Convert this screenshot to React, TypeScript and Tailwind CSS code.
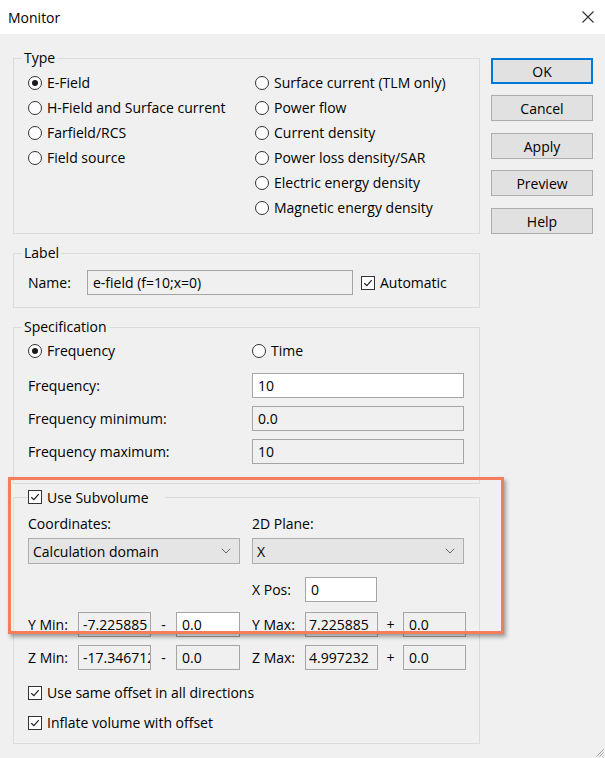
import React from 'react';

const Radio = ({ checked, label }: { checked?: boolean; label: string }) => (
  <div className="flex items-center gap-[5px] h-[25px]">
    <span className="w-[14px] h-[14px] rounded-full border border-[#333] bg-white flex items-center justify-center shrink-0">
      {checked && <span className="w-[6px] h-[6px] rounded-full bg-[#1a1a1a]" />}
    </span>
    <span>{label}</span>
  </div>
);

const Check = () => (
  <span className="w-[14px] h-[14px] border border-[#333] bg-white flex items-center justify-center shrink-0">
    <svg width="10" height="10" viewBox="0 0 10 10">
      <path d="M1.3 5.2 L3.9 7.7 L8.7 2.2" fill="none" stroke="#222" strokeWidth="1.2" />
    </svg>
  </span>
);

const Group = ({ title, className, children }: { title: string; className: string; children: React.ReactNode }) => (
  <div className={`relative border border-[#dcdcdc] ${className}`}>
    <span className="absolute -top-[11px] left-[8px] px-[2px] bg-[#f0f0f0] leading-[20px]">{title}</span>
    {children}
  </div>
);

const Field = ({ value, className }: { value: string; className: string }) => (
  <div className={`h-[25px] border border-[#a5a5a5] flex items-center overflow-hidden whitespace-nowrap ${className}`}>
    {value}
  </div>
);

const Chevron = () => (
  <svg width="10" height="6" viewBox="0 0 10 6">
    <path d="M0.8 0.8 L5 5 L9.2 0.8" fill="none" stroke="#666" strokeWidth="1" />
  </svg>
);

const Button = ({ label, primary, className }: { label: string; primary?: boolean; className?: string }) => (
  <div
    className={`h-[26px] flex items-center justify-center bg-[#e1e1e1] ${
      primary ? 'border-2 border-[#0078d7]' : 'border border-[#adadad]'
    } ${className ?? ''}`}
  >
    {label}
  </div>
);

export default function App() {
  return (
    <div className="relative w-[605px] h-[758px] bg-[#f0f0f0] text-[14px] text-black font-['Open_Sans',sans-serif] overflow-hidden">
      {/* Title bar */}
      <div className="h-[34px] bg-white flex items-center justify-between pl-[8px] pr-[11px]">
        <span className="text-[14px]">Monitor</span>
        <svg width="12" height="12" viewBox="0 0 12 12">
          <path d="M0.5 0.5 L11.5 11.5 M11.5 0.5 L0.5 11.5" stroke="#333" strokeWidth="1.1" />
        </svg>
      </div>

      <div className="flex pl-[13px] pt-[24px]">
        <div className="w-[467px] flex flex-col">
          {/* Type */}
          <Group title="Type" className="h-[176px] pt-[11px] pl-[14px]">
            <div className="flex">
              <div className="w-[227px] flex flex-col">
                <Radio checked label="E-Field" />
                <Radio label="H-Field and Surface current" />
                <Radio label="Farfield/RCS" />
                <Radio label="Field source" />
              </div>
              <div className="flex flex-col">
                <Radio label="Surface current (TLM only)" />
                <Radio label="Power flow" />
                <Radio label="Current density" />
                <Radio label="Power loss density/SAR" />
                <Radio label="Electric energy density" />
                <Radio label="Magnetic energy density" />
              </div>
            </div>
          </Group>

          {/* Label */}
          <Group title="Label" className="mt-[19px] h-[55px] pt-[16px] pl-[14px]">
            <div className="flex items-center">
              <span className="w-[59px]">Name:</span>
              <Field value="e-field (f=10;x=0)" className="w-[266px] pl-[5px] border-[#7a7a7a] bg-[#f0f0f0]" />
              <span className="ml-[8px] mr-[5px]">
                <Check />
              </span>
              <span>Automatic</span>
            </div>
          </Group>

          {/* Specification */}
          <Group title="Specification" className="mt-[19px] h-[157px] pt-[10px] pl-[14px]">
            <div className="grid grid-cols-[224px_212px] items-center">
              <Radio checked label="Frequency" />
              <Radio label="Time" />
            </div>
            <div className="mt-[10px] flex flex-col gap-[8px]">
              <div className="grid grid-cols-[224px_212px] items-center">
                <span>Frequency:</span>
                <Field value="10" className="pl-[5px] bg-white" />
              </div>
              <div className="grid grid-cols-[224px_212px] items-center">
                <span>Frequency minimum:</span>
                <Field value="0.0" className="pl-[5px] bg-[#f0f0f0]" />
              </div>
              <div className="grid grid-cols-[224px_212px] items-center">
                <span>Frequency maximum:</span>
                <Field value="10" className="pl-[5px] bg-[#f0f0f0]" />
              </div>
            </div>
          </Group>

          {/* Subvolume */}
          <div className="relative mt-[13px] h-[247px] border border-[#dcdcdc] pt-[15px] pl-[14px]">
            <div className="absolute -top-[11px] left-[14px] h-[20px] pr-[16px] bg-[#f0f0f0] flex items-center gap-[5px]">
              <Check />
              <span>Use Subvolume</span>
            </div>
            <div className="grid grid-cols-[224px_212px] items-center h-[20px]">
              <span>Coordinates:</span>
              <span>2D Plane:</span>
            </div>
            <div className="mt-[5px] grid grid-cols-[224px_212px] items-center">
              <div className="w-[212px] h-[26px] bg-[#e5e5e5] border border-[#adadad] flex items-center justify-between pl-[4px] pr-[8px]">
                <span>Calculation domain</span>
                <Chevron />
              </div>
              <div className="h-[26px] bg-[#e5e5e5] border border-[#adadad] flex items-center justify-between pl-[4px] pr-[8px]">
                <span>X</span>
                <Chevron />
              </div>
            </div>
            <div className="mt-[13px] grid grid-cols-[224px_212px] items-center">
              <span />
              <div className="flex items-center">
                <span className="w-[53px]">X Pos:</span>
                <Field value="0" className="w-[72px] pl-[5px] bg-white" />
              </div>
            </div>
            <div className="mt-[10px] flex items-center">
              <span className="w-[50px]">Y Min:</span>
              <Field value="-7.225885" className="w-[73px] pl-[4px] bg-[#f0f0f0]" />
              <span className="w-[25px] text-center">-</span>
              <Field value="0.0" className="w-[64px] pl-[5px] bg-white" />
              <span className="ml-[12px] w-[53px]">Y Max:</span>
              <Field value="7.225885" className="w-[73px] pl-[3px] bg-[#f0f0f0]" />
              <span className="w-[25px] text-center">+</span>
              <Field value="0.0" className="w-[63px] pl-[5px] bg-[#f0f0f0]" />
            </div>
            <div className="mt-[8px] flex items-center">
              <span className="w-[50px]">Z Min:</span>
              <Field value="-17.346712" className="w-[73px] pl-[4px] bg-[#f0f0f0]" />
              <span className="w-[25px] text-center">-</span>
              <Field value="0.0" className="w-[64px] pl-[5px] bg-[#f0f0f0]" />
              <span className="ml-[12px] w-[53px]">Z Max:</span>
              <Field value="4.997232" className="w-[73px] pl-[3px] bg-[#f0f0f0]" />
              <span className="w-[25px] text-center">+</span>
              <Field value="0.0" className="w-[63px] pl-[5px] bg-[#f0f0f0]" />
            </div>
            <div className="mt-[10px] h-[25px] flex items-center gap-[5px]">
              <Check />
              <span>Use same offset in all directions</span>
            </div>
            <div className="mt-[5px] h-[25px] flex items-center gap-[5px]">
              <Check />
              <span>Inflate volume with offset</span>
            </div>
          </div>
        </div>

        {/* Buttons */}
        <div className="ml-[11px] w-[102px] flex flex-col">
          <Button primary label="OK" />
          <Button label="Cancel" className="mt-[11px]" />
          <Button label="Apply" className="mt-[12px]" />
          <Button label="Preview" className="mt-[11px]" />
          <Button label="Help" className="mt-[12px]" />
        </div>
      </div>

      {/* Highlight overlay */}
      <div className="absolute left-[8px] top-[477px] w-[496px] h-[157px] border-[3px] border-[#f47e5c] shadow-[2px_3px_4px_rgba(0,0,0,0.35)] pointer-events-none" />

      {/* Resize grip */}
      <svg className="absolute right-[1px] bottom-[1px]" width="10" height="10" viewBox="0 0 10 10">
        <path d="M9.5 2.5 L2.5 9.5 M9.5 5.5 L5.5 9.5 M9.5 8.5 L8.5 9.5" stroke="#a0a0a0" strokeWidth="1" />
      </svg>
    </div>
  );
}
